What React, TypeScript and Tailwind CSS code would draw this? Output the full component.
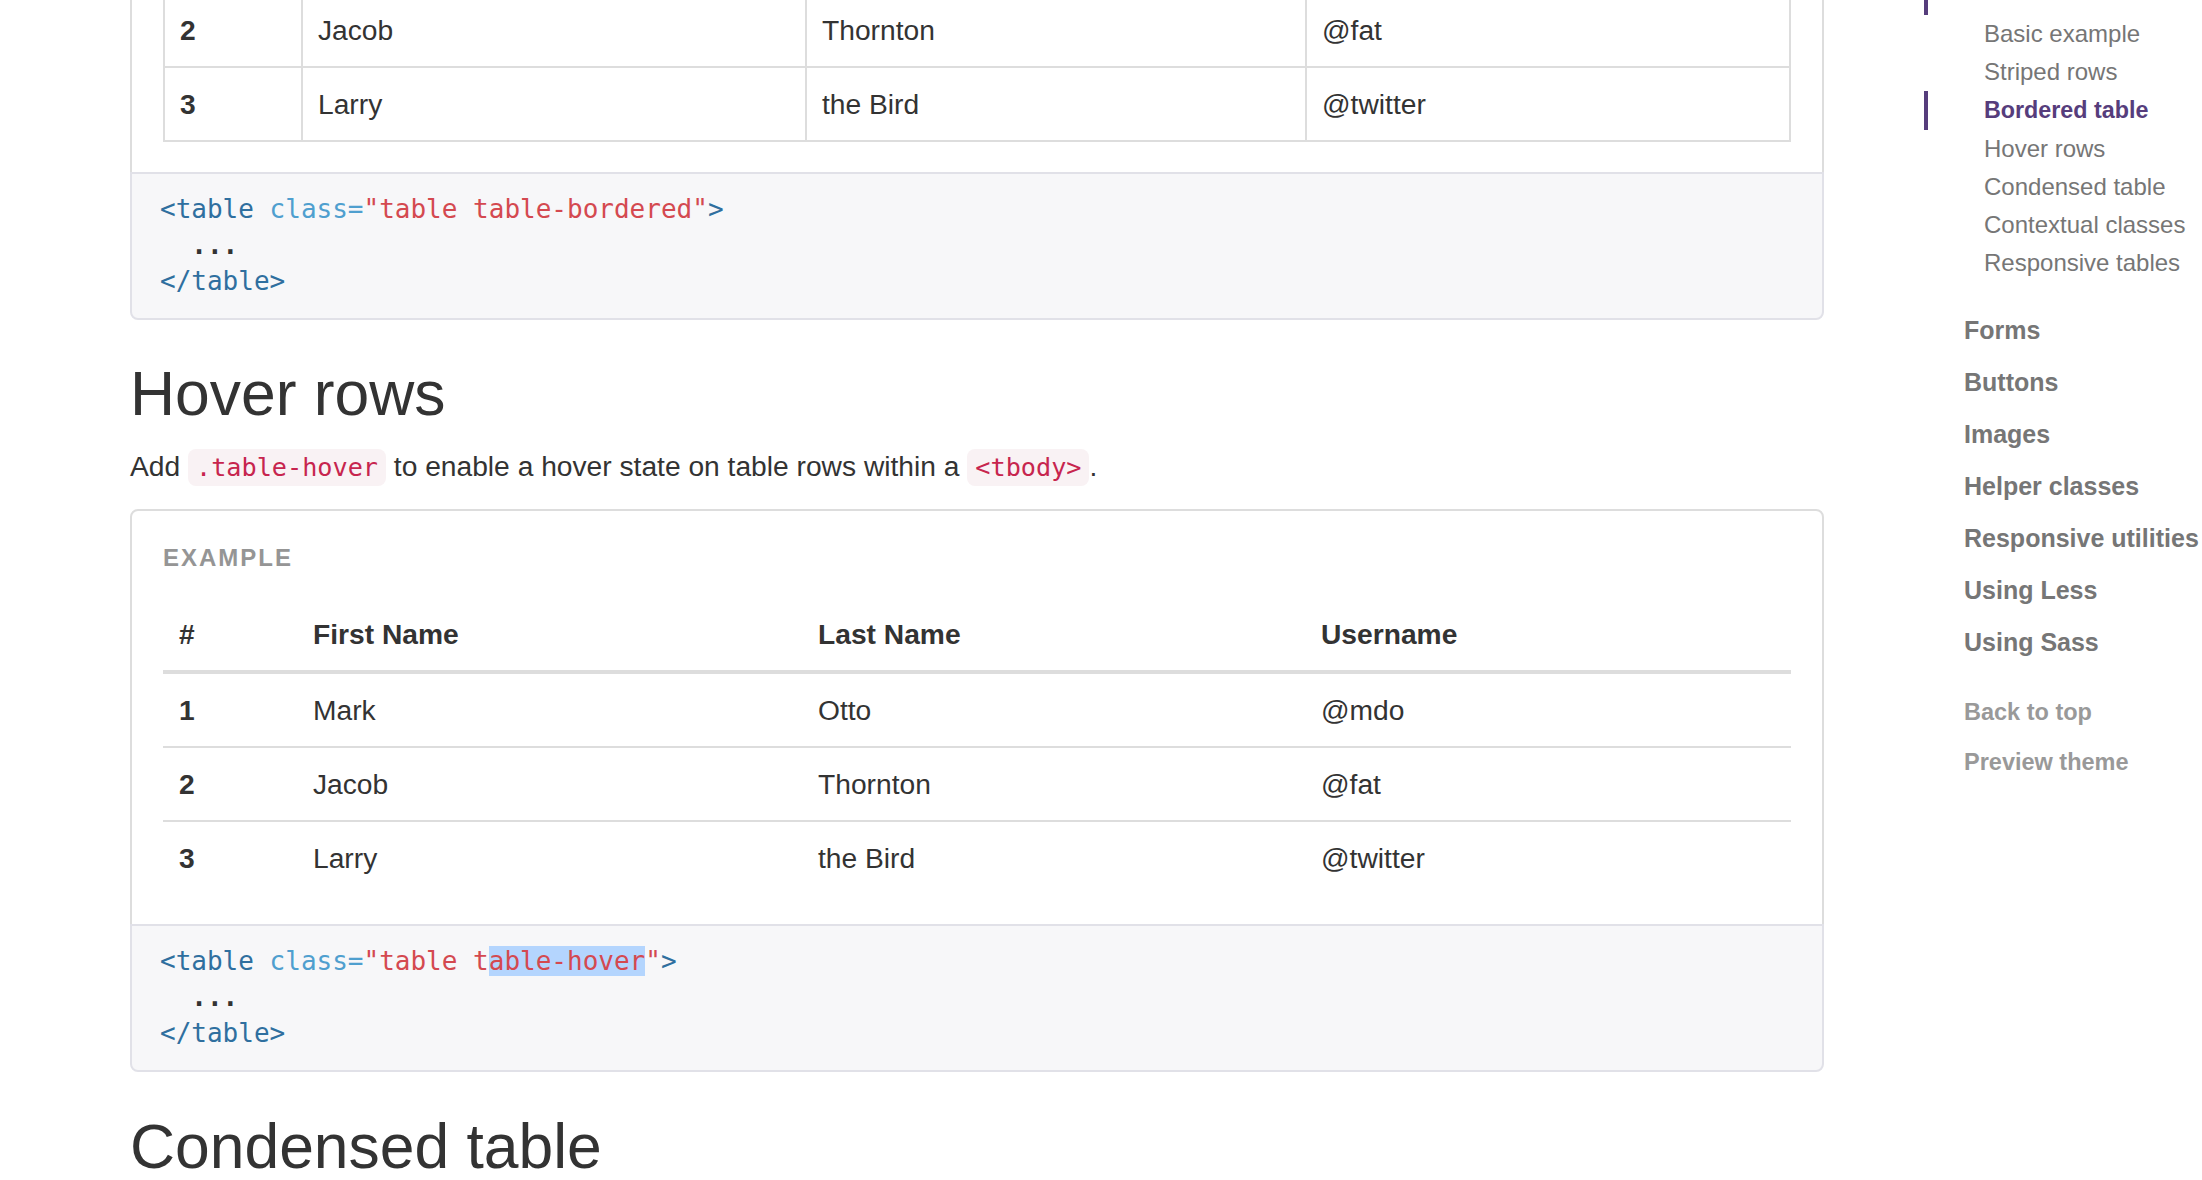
import React from 'react'

const ROWS = [
  ['1', 'Mark', 'Otto', '@mdo'],
  ['2', 'Jacob', 'Thornton', '@fat'],
  ['3', 'Larry', 'the Bird', '@twitter'],
]

const HEADS = ['#', 'First Name', 'Last Name', 'Username']

const BORDERED_WIDTHS = ['w-[138px]', 'w-[504px]', 'w-[500px]', 'w-[484px]']
const HOVER_WIDTHS = ['w-[134px]', 'w-[505px]', 'w-[503px]', 'w-[486px]']

const SUB_NAV = [
  'Basic example',
  'Striped rows',
  'Bordered table',
  'Hover rows',
  'Condensed table',
  'Contextual classes',
  'Responsive tables',
]

const TOP_NAV = ['Forms', 'Buttons', 'Images', 'Helper classes', 'Responsive utilities', 'Using Less', 'Using Sass']

function Example({ children }: { children: React.ReactNode }) {
  return (
    <div className="border-2 border-[#ddd] rounded-t-[8px] pt-[30px] pb-[30px] px-[31px]">
      <div className="h-[34px] leading-[34px] text-[24px] font-bold uppercase tracking-[2px] text-[#959595] mb-[23px]">
        Example
      </div>
      {children}
    </div>
  )
}

function CodeBlock({ hover }: { hover?: boolean }) {
  return (
    <div className="-mt-[2px] border-2 border-[#e1e1e8] bg-[#f7f7f9] rounded-b-[8px] pt-[17px] pb-[19px] px-[28px]">
      <div className="font-['DejaVu_Sans_Mono',monospace] text-[26px] leading-[36px] text-[#333] whitespace-pre">
        <div>
          <span className="text-[#2f6f9f]">&lt;table</span>{' '}
          <span className="text-[#4f9fcf]">class=</span>
          {hover ? (
            <span className="text-[#d44950]">
              "table t<span className="bg-[#b4d5fe]">able-hover</span>"
            </span>
          ) : (
            <span className="text-[#d44950]">"table table-bordered"</span>
          )}
          <span className="text-[#2f6f9f]">&gt;</span>
        </div>
        <div className="font-bold">  ...</div>
        <div className="text-[#2f6f9f]">&lt;/table&gt;</div>
      </div>
    </div>
  )
}

function BorderedTable() {
  return (
    <table className="w-full table-fixed border-separate border-spacing-0 border-l-2 border-t-2 border-[#ddd] text-[28.2px] leading-[40px]">
      <thead>
        <tr>
          {HEADS.map((h, i) => (
            <th
              key={h}
              className={`${BORDERED_WIDTHS[i]} border-r-2 border-b-4 border-[#ddd] px-[15px] py-[16px] text-left font-bold align-bottom`}
            >
              {h}
            </th>
          ))}
        </tr>
      </thead>
      <tbody>
        {ROWS.map((r) => (
          <tr key={r[0]}>
            {r.map((c, i) => (
              <td
                key={i}
                className={`border-r-2 border-b-2 border-[#ddd] px-[15px] py-[16px] ${i === 0 ? 'font-bold' : ''}`}
              >
                {c}
              </td>
            ))}
          </tr>
        ))}
      </tbody>
    </table>
  )
}

function HoverTable() {
  return (
    <table className="w-full table-fixed border-separate border-spacing-0 text-[28.2px] leading-[40px]">
      <thead>
        <tr>
          {HEADS.map((h, i) => (
            <th
              key={h}
              className={`${HOVER_WIDTHS[i]} border-b-4 border-[#ddd] px-[16px] py-[16px] text-left font-bold align-bottom`}
            >
              {h}
            </th>
          ))}
        </tr>
      </thead>
      <tbody>
        {ROWS.map((r, ri) => (
          <tr key={r[0]}>
            {r.map((c, i) => (
              <td
                key={i}
                className={`px-[16px] py-[16px] border-[#ddd] ${ri > 0 ? 'border-t-2' : ''} ${i === 0 ? 'font-bold' : ''}`}
              >
                {c}
              </td>
            ))}
          </tr>
        ))}
      </tbody>
    </table>
  )
}

function InlineCode({ children }: { children: React.ReactNode }) {
  return (
    <code className="font-['DejaVu_Sans_Mono',monospace] text-[25.2px] text-[#c7254e] bg-[#f9f2f4] rounded-[8px] px-[8px] py-[4px]">
      {children}
    </code>
  )
}

export default function App() {
  return (
    <div className="flex items-start w-[2202px] h-[1180px] overflow-hidden bg-white pl-[130px] font-['Liberation_Sans',Arial,sans-serif] text-[#333]">
      {/* Main docs column */}
      <main className="w-[1694px] shrink-0 -mt-[247px]">
        <Example>
          <BorderedTable />
        </Example>
        <CodeBlock />

        <h2 className="mt-[40px] text-[62.4px] leading-[68px] font-normal">Hover rows</h2>
        <p className="mt-[18px] text-[28.2px] leading-[40px]">
          Add <InlineCode>.table-hover</InlineCode> to enable a hover state on table rows within a{' '}
          <InlineCode>&lt;tbody&gt;</InlineCode>.
        </p>
        <div className="mt-[21px]">
          <Example>
            <HoverTable />
          </Example>
          <CodeBlock hover />
        </div>

        <h2 className="mt-[41px] text-[62.4px] leading-[68px] font-normal">Condensed table</h2>
      </main>

      {/* Side nav */}
      <aside className="ml-[100px] -mt-[37px] w-[278px] shrink-0">
        <div className="h-[52px] leading-[52px] border-l-4 border-[#563d7c] pl-[36px] text-[25px] font-bold text-[#563d7c]">
          Tables
        </div>
        <ul className="pb-[22px]">
          {SUB_NAV.map((s) =>
            s === 'Bordered table' ? (
              <li
                key={s}
                className="h-[38.2px] leading-[38.2px] border-l-4 border-[#563d7c] pl-[56px] text-[23.3px] font-bold text-[#563d7c]"
              >
                {s}
              </li>
            ) : (
              <li key={s} className="h-[38.2px] leading-[38.2px] pl-[60px] text-[24px] text-[#767676]">
                {s}
              </li>
            ),
          )}
        </ul>
        <ul>
          {TOP_NAV.map((t) => (
            <li key={t} className="h-[52px] leading-[52px] pl-[40px] text-[25px] font-bold text-[#767676] whitespace-nowrap">
              {t}
            </li>
          ))}
        </ul>
        <div className="mt-[19px]">
          <div className="h-[50px] leading-[50px] pl-[40px] text-[23.5px] font-bold text-[#999]">Back to top</div>
          <div className="h-[50px] leading-[50px] pl-[40px] text-[23.5px] font-bold text-[#999]">Preview theme</div>
        </div>
      </aside>
    </div>
  )
}
